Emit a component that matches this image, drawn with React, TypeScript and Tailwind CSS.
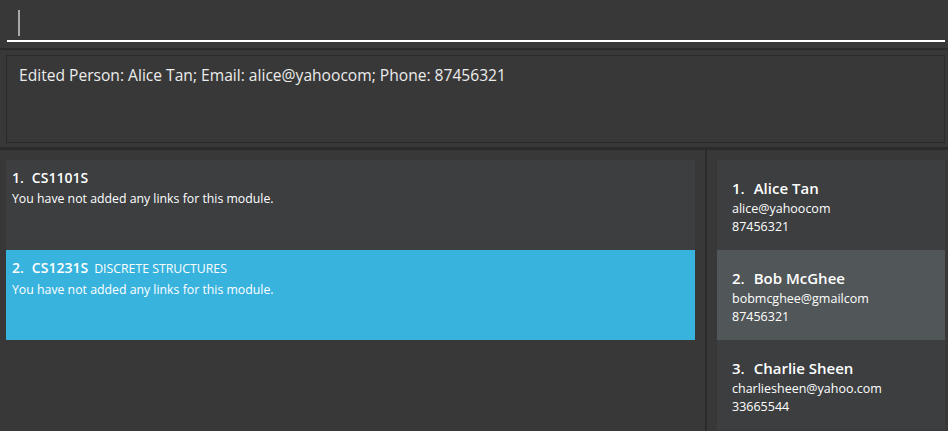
import React from "react";

const font = { fontFamily: '"Open Sans", "Noto Sans", sans-serif' };

function ModuleCard({ idx, code, title, selected }: { idx: number; code: string; title?: string; selected?: boolean }) {
  return (
    <div className={`h-[90px] px-[6px] pt-[8px] ${selected ? "bg-[#38b3de]" : "bg-[#3c3e3f]"}`}>
      <div className="flex items-baseline text-white">
        <span className="text-[14px] font-semibold leading-[20px]">{idx}.</span>
        <span className="ml-[8px] text-[14px] font-semibold leading-[20px]">{code}</span>
        {title && <span className="ml-[6px] text-[12.3px] leading-[20px]">{title}</span>}
      </div>
      <div className="mt-[2px] text-[12.3px] leading-[18px] text-white">You have not added any links for this module.</div>
    </div>
  );
}

function PersonCard({ idx, name, email, phone, selected }: { idx: number; name: string; email: string; phone: string; selected?: boolean }) {
  return (
    <div className={`h-[90px] pl-[15px] pt-[17px] ${selected ? "bg-[#515658]" : "bg-[#3c3e3f]"}`}>
      <div className="flex items-baseline text-[15px] font-semibold leading-[22px] text-white">
        <span>{idx}.</span>
        <span className="ml-[9px]">{name}</span>
      </div>
      <div className="mt-[1px] text-[12.5px] leading-[18px] text-white">{email}</div>
      <div className="text-[12.5px] leading-[17px] text-white">{phone}</div>
    </div>
  );
}

export default function App() {
  return (
    <div className="h-[431px] w-[948px] overflow-hidden bg-[#383838]" style={font}>
      {/* command box */}
      <div className="h-[48px] pl-[7px] pr-[3px] pt-[10px]">
        <div className="h-[32px] border-b-2 border-white pl-[11px]">
          <div className="h-[26px] w-[2px] bg-[#a8a8a8]" />
        </div>
      </div>
      <div className="h-[2px] bg-[#2b2b2b]" />
      {/* result box */}
      <div className="h-[97px] pl-[6px] pr-[3px] pt-[5px]">
        <div className="h-[88px] border border-[#2b2b2b] pl-[12px] pt-[8px] text-[15.6px] leading-[22px] text-[#ececec]">
          Edited Person: Alice Tan; Email: alice@yahoocom; Phone: 87456321
        </div>
      </div>
      <div className="h-[3px] bg-[#2b2b2b]" />
      {/* lists */}
      <div className="flex h-[281px]">
        <div className="w-[705px] pl-[6px] pr-[10px] pt-[10px]">
          <ModuleCard idx={1} code="CS1101S" />
          <ModuleCard idx={2} code="CS1231S" title="DISCRETE STRUCTURES" selected />
        </div>
        <div className="w-[2px] bg-[#2b2b2b]" />
        <div className="flex-1 pl-[10px] pr-[3px] pt-[10px]">
          <PersonCard idx={1} name="Alice Tan" email="alice@yahoocom" phone="87456321" />
          <PersonCard idx={2} name="Bob McGhee" email="bobmcghee@gmailcom" phone="87456321" selected />
          <PersonCard idx={3} name="Charlie Sheen" email="charliesheen@yahoo.com" phone="33665544" />
        </div>
      </div>
    </div>
  );
}
